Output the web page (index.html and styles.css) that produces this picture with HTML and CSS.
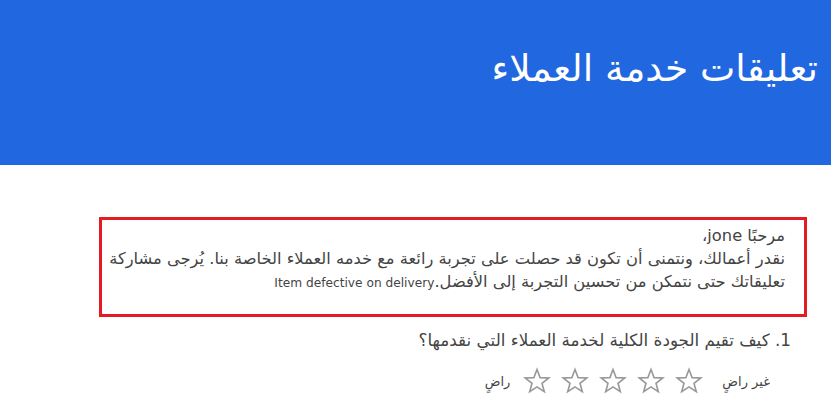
FILE: index.html
```html
<!DOCTYPE html>
<html lang="ar" dir="rtl">
<head>
<meta charset="utf-8">
<link rel="stylesheet" href="styles.css">
</head>
<body>
<header class="banner">
  <h1 class="title">تعليقات خدمة العملاء</h1>
</header>
<main class="content">
  <div class="notice">
    <p class="line">مرحبًا jone،</p>
    <p class="line">نقدر أعمالك، ونتمنى أن تكون قد حصلت على تجربة رائعة مع خدمه العملاء الخاصة بنا. يُرجى مشاركة تعليقاتك حتى نتمكن من تحسين التجربة إلى الأفضل.<span class="item">Item defective on delivery</span></p>
  </div>
  <p class="question">1. كيف تقيم الجودة الكلية لخدمة العملاء التي نقدمها؟</p>
  <div class="rating">
    <span class="label">غير راضٍ</span>
    <div class="stars">
      <svg class="star" viewBox="0 0 28 28"><path d="M14 2.5 L17.1 10.6 L25.8 10.9 L19 16.3 L21.3 24.7 L14 19.9 L6.7 24.7 L9 16.3 L2.2 10.9 L10.9 10.6 Z"/></svg>
      <svg class="star" viewBox="0 0 28 28"><path d="M14 2.5 L17.1 10.6 L25.8 10.9 L19 16.3 L21.3 24.7 L14 19.9 L6.7 24.7 L9 16.3 L2.2 10.9 L10.9 10.6 Z"/></svg>
      <svg class="star" viewBox="0 0 28 28"><path d="M14 2.5 L17.1 10.6 L25.8 10.9 L19 16.3 L21.3 24.7 L14 19.9 L6.7 24.7 L9 16.3 L2.2 10.9 L10.9 10.6 Z"/></svg>
      <svg class="star" viewBox="0 0 28 28"><path d="M14 2.5 L17.1 10.6 L25.8 10.9 L19 16.3 L21.3 24.7 L14 19.9 L6.7 24.7 L9 16.3 L2.2 10.9 L10.9 10.6 Z"/></svg>
      <svg class="star" viewBox="0 0 28 28"><path d="M14 2.5 L17.1 10.6 L25.8 10.9 L19 16.3 L21.3 24.7 L14 19.9 L6.7 24.7 L9 16.3 L2.2 10.9 L10.9 10.6 Z"/></svg>
    </div>
    <span class="label">راضٍ</span>
  </div>
</main>
</body>
</html>
```
FILE: styles.css
```css
html, body {
  margin: 0;
  padding: 0;
  background: #ffffff;
}
body {
  font-family: "DejaVu Sans", "Noto Sans", sans-serif;
  color: #444444;
}
.banner {
  height: 165px;
  background: #2167e0;
  box-sizing: border-box;
  padding: 42px 13px 0 0;
}
.title {
  margin: 0;
  font-size: 37.5px;
  font-weight: normal;
  color: #ffffff;
  line-height: 52px;
}
.content {
  padding: 52px 24px 0 99px;
}
.notice {
  border: 3px solid #e31b23;
  padding: 4px 19px 19px 2px;
}
.line {
  margin: 0;
  font-size: 16.3px;
  line-height: 23px;
}
.item {
  font-size: 12.2px;
}
.question {
  margin: 11px 16px 0 0;
  font-size: 16.8px;
  line-height: 24px;
}
.rating {
  display: flex;
  align-items: center;
  gap: 19px;
  margin: 15px 37px 0 0;
}
.rating .label:last-child {
  margin-right: -6px;
}
.label {
  font-size: 13px;
}
.stars {
  display: flex;
  gap: 10px;
}
.star {
  width: 28px;
  height: 28px;
  fill: none;
  stroke: #999999;
  stroke-width: 1.6;
}
```
